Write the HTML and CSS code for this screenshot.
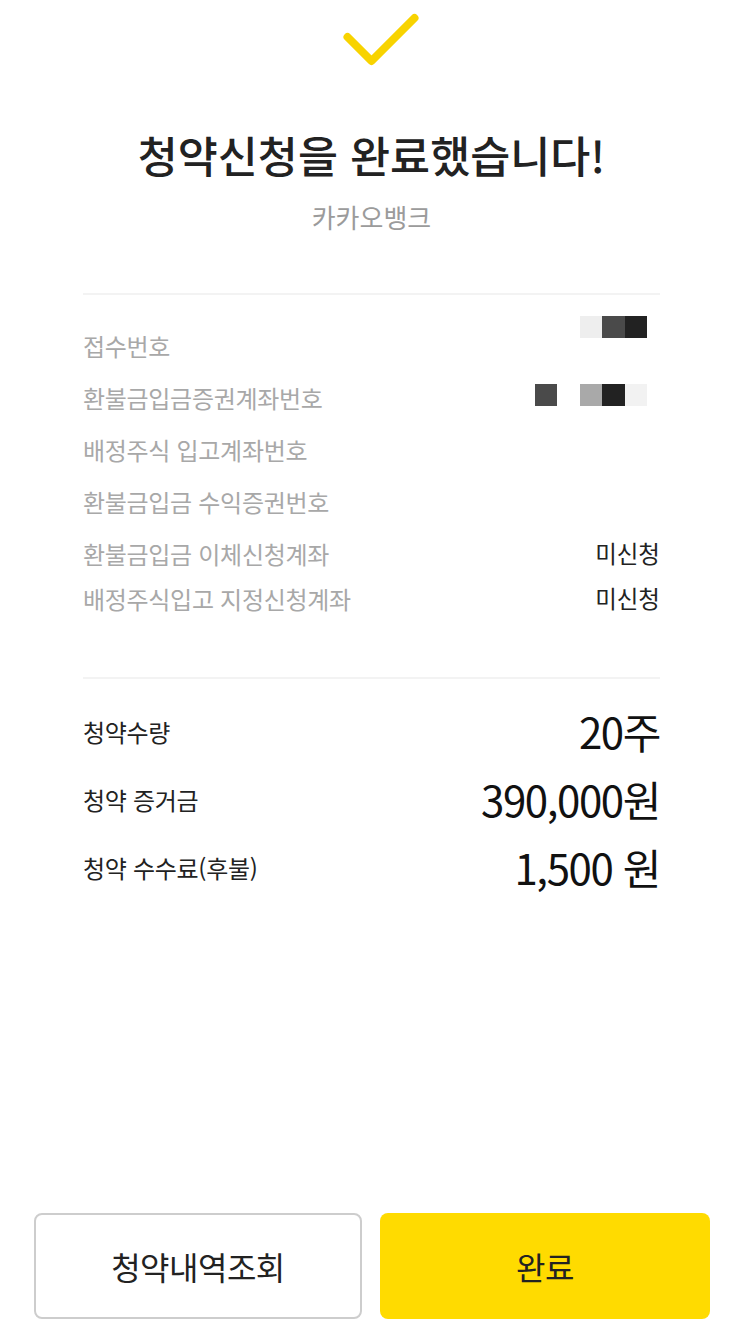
FILE: index.html
```html
<!DOCTYPE html>
<html lang="ko">
<head>
<meta charset="utf-8">
<title>청약신청 완료</title>
<link rel="stylesheet" href="styles.css">
</head>
<body>
<div class="page">
  <div class="check">
    <svg width="90" height="72" viewBox="0 0 90 72" aria-hidden="true">
      <path d="M16.5 37 L40.5 61 L83.5 18" fill="none" stroke="#F8D300" stroke-width="8" stroke-linecap="round" stroke-linejoin="round"/>
    </svg>
  </div>
  <h1 class="title">청약신청을 완료했습니다!</h1>
  <p class="subtitle">카카오뱅크</p>

  <div class="divider divider--top"></div>

  <div class="info">
    <div class="row">
      <span class="label">접수번호</span>
      <span class="mask mask--r1">
        <i class="px c-eee"></i><i class="px c-4a"></i><i class="px c-22"></i>
      </span>
    </div>
    <div class="row">
      <span class="label">환불금입금증권계좌번호</span>
      <span class="mask mask--r2">
        <i class="px c-4a"></i><i class="px c-none"></i><i class="px c-aa"></i><i class="px c-22"></i><i class="px c-f2"></i>
      </span>
    </div>
    <div class="row">
      <span class="label">배정주식 입고계좌번호</span>
    </div>
    <div class="row">
      <span class="label">환불금입금 수익증권번호</span>
    </div>
    <div class="row">
      <span class="label">환불금입금 이체신청계좌</span>
      <span class="val">미신청</span>
    </div>
    <div class="row row--tight">
      <span class="label">배정주식입고 지정신청계좌</span>
      <span class="val">미신청</span>
    </div>
  </div>

  <div class="divider divider--mid"></div>

  <div class="summary">
    <div class="srow">
      <span class="slabel">청약수량</span>
      <span class="sval">20주</span>
    </div>
    <div class="srow">
      <span class="slabel">청약 증거금</span>
      <span class="sval">390,000원</span>
    </div>
    <div class="srow">
      <span class="slabel">청약 수수료(후불)</span>
      <span class="sval">1,500 원</span>
    </div>
  </div>

  <div class="footer">
    <button class="btn btn--ghost" type="button">청약내역조회</button>
    <button class="btn btn--primary" type="button">완료</button>
  </div>
</div>
</body>
</html>
```
FILE: styles.css
```css
* { box-sizing: border-box; }
html, body { margin: 0; padding: 0; background: #fff; }
body {
  font-family: "Noto Sans CJK KR", "Noto Sans", sans-serif;
  color: #222;
}
.page {
  min-height: 100vh;
  display: flex;
  flex-direction: column;
}
.check {
  height: 72px;
  display: flex;
  justify-content: center;
}
.check svg { display: block; margin-left: 9px; }
.title {
  margin: 53px 0 0;
  text-align: center;
  font-size: 43.5px;
  font-weight: 500;
  line-height: 60px;
  color: #222;
}
.subtitle {
  margin: 14px 0 0;
  text-align: center;
  font-size: 26px;
  line-height: 36px;
  color: #9b9b9b;
}
.divider {
  margin: 0 83px;
  height: 2px;
  background: #f3f3f3;
}
.divider--top { margin-top: 58px; }
.divider--mid { margin-top: 60px; }
.info {
  padding: 24px 83px 0;
}
.row {
  height: 52px;
  display: flex;
  justify-content: space-between;
  align-items: center;
}
.row--tight { height: 38px; }
.label {
  font-size: 24px;
  color: #a8a8a8;
  letter-spacing: -0.3px;
}
.val {
  font-size: 23.5px;
  color: #222;
}
.mask {
  display: flex;
  align-self: flex-start;
  margin-right: 13px;
}
.mask--r1 { margin-top: -3px; }
.mask--r2 { margin-top: 13px; }
.px {
  display: block;
  width: 22.5px;
  height: 22px;
}
.c-eee { background: #eeeeee; }
.c-4a { background: #4a4a4a; }
.c-22 { background: #222222; }
.c-aa { background: #a9a9a9; }
.c-f2 { background: #f2f2f2; }
.c-none { background: transparent; }
.summary {
  padding: 18px 83px 0;
}
.srow {
  height: 68px;
  display: flex;
  justify-content: space-between;
  align-items: center;
}
.slabel {
  font-size: 24px;
  color: #222;
  letter-spacing: -0.3px;
}
.sval {
  font-size: 42px;
  color: #111;
  letter-spacing: -1.4px;
  line-height: 1;
}
.footer {
  margin-top: auto;
  display: flex;
  gap: 18px;
  padding: 0 33px 5px 34px;
}
.btn {
  height: 106px;
  border-radius: 8px;
  font-family: "Noto Sans CJK KR", "Noto Sans", sans-serif;
  font-size: 32px;
  font-weight: 400;
  color: #222;
  letter-spacing: -0.5px;
}
.btn--ghost {
  flex: 0 0 328px;
  background: #fff;
  border: 2px solid #cdcdcd;
}
.btn--primary {
  flex: 1 1 0;
  background: #ffdb00;
  border: none;
}
```
